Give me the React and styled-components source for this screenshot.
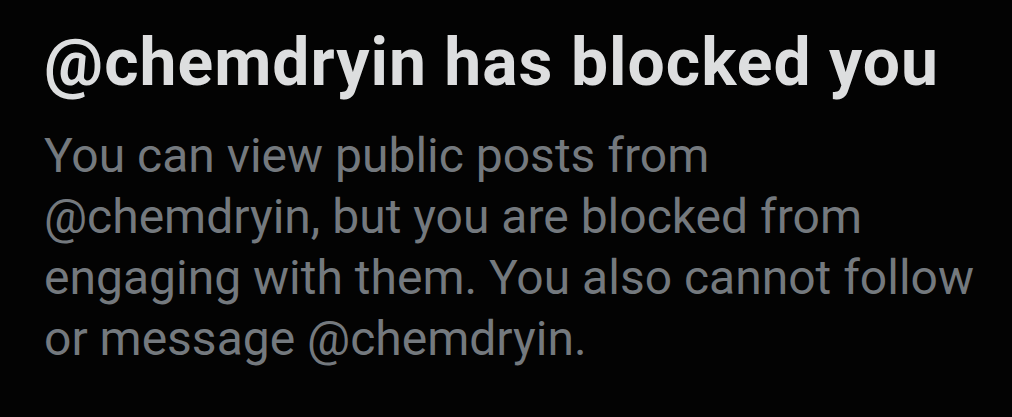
import React from "react";
import styled, { createGlobalStyle } from "styled-components";

const Global = createGlobalStyle`
  html, body { margin: 0; padding: 0; background: #030303; }
  body { font-family: Roboto, "Liberation Sans", sans-serif; }
`;

const Page = styled.div`
  width: 1012px;
  height: 417px;
  background: #030303;
  box-sizing: border-box;
  padding: 25px 0 0 44px;
  overflow: hidden;
`;

const Card = styled.div`
  display: flex;
  flex-direction: column;
  gap: 24px;
  width: 940px;
`;

const Title = styled.h1`
  margin: 0;
  font-size: 66px;
  line-height: 76px;
  font-weight: 700;
  letter-spacing: 1px;
  color: #dddedf;
  white-space: nowrap;
`;

const Body = styled.p`
  margin: 0;
  font-size: 48px;
  line-height: 61px;
  font-weight: 400;
  color: #74797e;
`;

export default function App() {
  return (
    <>
      <Global />
      <Page>
        <Card>
          <Title>@chemdryin has blocked you</Title>
          <Body>
            You can view public posts from @chemdryin, but you are blocked from
            engaging with them. You also cannot follow or message @chemdryin.
          </Body>
        </Card>
      </Page>
    </>
  );
}
